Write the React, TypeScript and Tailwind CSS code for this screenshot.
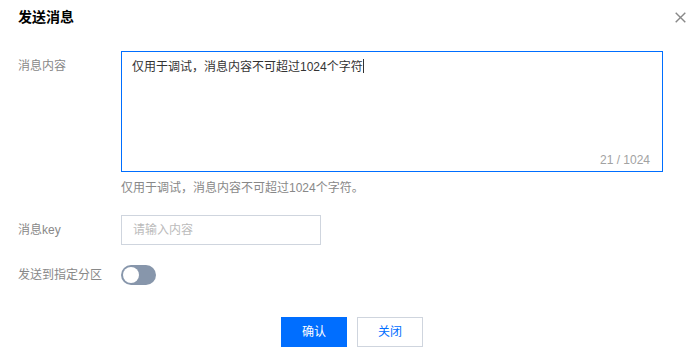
export default function App() {
  return (
    <div
      className="w-[695px] h-[354px] bg-white text-[12px] text-[#333]"
      style={{ fontFamily: '"Liberation Sans", "Noto Sans CJK SC", sans-serif' }}
    >
      {/* Header */}
      <div className="flex items-center justify-between pl-[18px] pr-[9px] pt-[5px] h-[29px]">
        <h1 className="text-[14px] font-bold text-[#000] leading-[24px]">发送消息</h1>
        <button className="w-[11px] h-[11px] mt-[1px]">
          <svg viewBox="0 0 11 11" width="11" height="11" className="block">
            <path d="M0.7 0.7 L10.3 10.3 M10.3 0.7 L0.7 10.3" stroke="#888" strokeWidth="1.4" />
          </svg>
        </button>
      </div>

      <div className="pl-[18px] mt-[22px]">
        {/* Message content */}
        <div className="flex">
          <label className="w-[103px] leading-[30px] text-[#888]">消息内容</label>
          <div>
            <div className="relative w-[542px] h-[121px] border border-[#006eff] pt-[5px] px-[10px] leading-[20px]">
              <span>仅用于调试，消息内容不可超过1024个字符</span>
              <span className="inline-block w-px h-[14px] bg-[#333] align-[-2px]"></span>
              <span className="absolute right-[12px] bottom-[3px] text-[#a2a2a2] leading-[16px]">21 / 1024</span>
            </div>
            <p className="mt-[8px] leading-[16px] text-[#888]">仅用于调试，消息内容不可超过1024个字符。</p>
          </div>
        </div>

        {/* Message key */}
        <div className="flex mt-[19px]">
          <label className="w-[103px] leading-[30px] text-[#888]">消息key</label>
          <div className="w-[200px] h-[30px] border border-[#cfd5de] px-[11px] leading-[28px] text-[#bbb]">
            请输入内容
          </div>
        </div>

        {/* Partition switch */}
        <div className="flex items-center mt-[15px] h-[30px]">
          <label className="w-[103px] leading-[30px] text-[#888]">发送到指定分区</label>
          <div className="w-[35px] h-[20px] rounded-full bg-[#8796ab] flex items-center pl-[2px]">
            <div className="w-[16px] h-[16px] rounded-full bg-white"></div>
          </div>
        </div>
      </div>

      {/* Footer buttons */}
      <div className="flex justify-center gap-[10px] pl-[9px] mt-[27px]">
        <button className="w-[66px] h-[30px] bg-[#006eff] text-white leading-[30px]">确认</button>
        <button className="w-[66px] h-[30px] border border-[#cfd5de] text-[#006eff] leading-[28px]">关闭</button>
      </div>
    </div>
  );
}
